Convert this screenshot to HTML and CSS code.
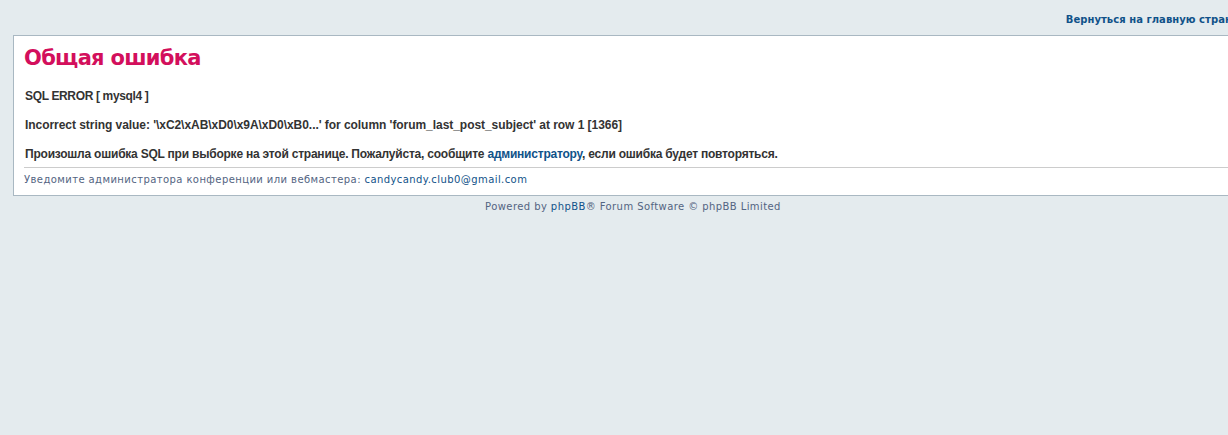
FILE: index.html
```html
<!DOCTYPE html>
<html lang="ru">
<head>
<meta charset="utf-8">
<title>Общая ошибка</title>
<link rel="stylesheet" href="styles.css">
</head>
<body>
<div class="wrap">
  <div class="page-header">
    <a class="home-link" href="#">Вернуться на главную страницу</a>
  </div>
  <div class="panel">
    <div class="content">
      <h1 class="title">Общая ошибка</h1>
      <p class="msg msg-short">SQL ERROR [ mysql4 ]</p>
      <p class="msg msg-code">Incorrect string value: '\xC2\xAB\xD0\x9A\xD0\xB0...' for column 'forum_last_post_subject' at row 1 [1366]</p>
      <p class="msg">Произошла ошибка SQL при выборке на этой странице. Пожалуйста, сообщите <a href="#">администратору</a>, если ошибка будет повторяться.</p>
    </div>
    <p class="notice">Уведомите администратора конференции или вебмастера: <a href="#">candycandy.club0@gmail.com</a></p>
  </div>
  <div class="page-footer">
    Powered by <a href="#">phpBB</a>® Forum Software © phpBB Limited
  </div>
</div>
</body>
</html>
```

FILE: styles.css
```css
html, body {
  margin: 0;
  padding: 0;
  background: #E4EBEE;
  overflow: hidden;
}

body {
  font-family: "DejaVu Sans", Verdana, sans-serif;
  font-size: 10px;
  color: #536482;
}

a {
  color: #105289;
  text-decoration: none;
}

.wrap {
  width: 1240px;
  padding: 0 13px 15px 13px;
}

.page-header {
  height: 35px;
  box-sizing: border-box;
  padding-top: 13px;
  text-align: right;
}

.home-link {
  font-weight: bold;
  font-size: 10px;
  line-height: 14px;
  letter-spacing: 0.05px;
}

.panel {
  background: #FFFFFF;
  border: 1px solid #A9B8C2;
}

.content {
  padding: 10px 10px 6px 10px;
}

.title {
  margin: 0 0 19px 0;
  font-family: "DejaVu Sans", Verdana, sans-serif;
  font-size: 21px;
  font-weight: bold;
  line-height: 24px;
  letter-spacing: -0.7px;
  color: #D30F5C;
}

.msg {
  margin: 0 0 15px 1px;
  font-family: "Liberation Sans", Arial, sans-serif;
  font-size: 12px;
  font-weight: bold;
  line-height: 14px;
  letter-spacing: -0.22px;
  color: #333333;
}

.msg-short {
  letter-spacing: -0.35px;
}

.msg-code {
  letter-spacing: -0.05px;
}

.msg:last-child {
  margin-bottom: 0;
}

.notice {
  margin: 0 0 0 10px;
  padding: 5px 0 9px 0;
  border-top: 1px solid #CCCCCC;
  line-height: 13px;
  font-size: 10px;
  letter-spacing: 0.42px;
}

.page-footer {
  margin-top: 5px;
  text-align: center;
  line-height: 12px;
  letter-spacing: 0.42px;
}
```
